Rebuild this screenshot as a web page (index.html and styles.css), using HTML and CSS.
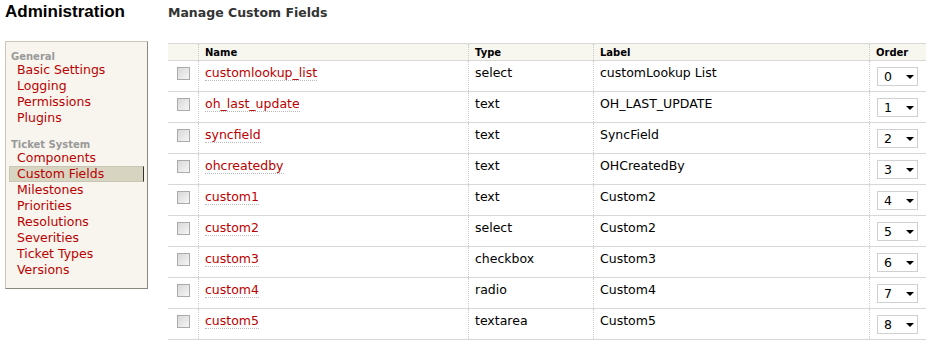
FILE: index.html
```html
<!DOCTYPE html>
<html lang="en">
<head>
  <meta charset="UTF-8">
  <title>Manage Custom Fields</title>
  <link rel="stylesheet" href="styles.css">
</head>
<body>
  <div class="page">
    <div class="side">
      <h1>Administration</h1>
      <div class="tabs">
        <div class="group">General</div>
        <a href="#">Basic Settings</a>
        <a href="#">Logging</a>
        <a href="#">Permissions</a>
        <a href="#">Plugins</a>
        <div class="group">Ticket System</div>
        <a href="#">Components</a>
        <a href="#" class="active">Custom Fields</a>
        <a href="#">Milestones</a>
        <a href="#">Priorities</a>
        <a href="#">Resolutions</a>
        <a href="#">Severities</a>
        <a href="#">Ticket Types</a>
        <a href="#">Versions</a>
      </div>
    </div>

    <div class="content">
      <h2>Manage Custom Fields</h2>
      <table class="listing">
        <thead>
          <tr>
            <th class="sel"></th>
            <th class="name">Name</th>
            <th class="type">Type</th>
            <th class="label">Label</th>
            <th class="order">Order</th>
          </tr>
        </thead>
        <tbody id="rows"></tbody>
      </table>
    </div>
  </div>

  <script>
    const fields = [
      ["customlookup_list", "select", "customLookup List"],
      ["oh_last_update", "text", "OH_LAST_UPDATE"],
      ["syncfield", "text", "SyncField"],
      ["ohcreatedby", "text", "OHCreatedBy"],
      ["custom1", "text", "Custom2"],
      ["custom2", "select", "Custom2"],
      ["custom3", "checkbox", "Custom3"],
      ["custom4", "radio", "Custom4"],
      ["custom5", "textarea", "Custom5"]
    ];

    const body = document.getElementById("rows");
    fields.forEach((f, i) => {
      body.innerHTML += '<tr>' +
        '<td class="sel"><span class="check"></span></td>' +
        `<td class="name"><a href="#">${f[0]}</a></td>` +
        `<td class="type">${f[1]}</td>` +
        `<td class="label">${f[2]}</td>` +
        `<td class="order"><span class="select">${i}<i></i></span></td>` +
      '</tr>';
    });
  </script>
</body>
</html>
```

FILE: styles.css
```css
body {
  margin: 0;
  padding: 0;
  background-color: #fff;
  font-family: "DejaVu Sans", Verdana, sans-serif;
  font-size: 12px;
  color: #000;
  overflow: hidden;
}
.page {
  display: flex;
  padding: 0 0 0 5px;
}
.side {
  width: 143px;
  flex-shrink: 0;
}
h1 {
  font-family: "Liberation Sans", Arial, sans-serif;
  font-size: 17px;
  font-weight: bold;
  margin: 2px 0 0 0;
  height: 39px;
}
.tabs {
  background-color: #f7f5ee;
  border: 1px solid #c8c6bc;
  border-right-color: #8a8980;
  border-bottom-color: #8a8980;
  padding: 9px 3px 10px 3px;
}
.group {
  font-size: 10px;
  font-weight: bold;
  color: #999;
  padding-left: 2px;
  line-height: 11px;
  height: 11px;
}
a + .group {
  margin-top: 13px;
}
.tabs a {
  display: block;
  color: #b00;
  text-decoration: none;
  font-size: 12.5px;
  padding-left: 7px;
  border: 1px solid transparent;
  height: 14px;
  line-height: 14px;
}
.tabs a.active {
  background-color: #d7d4c2;
  border-color: #c9c6b4;
  border-right: 1px solid #333;
}
.content {
  margin-left: 20px;
  flex: 1;
}
h2 {
  font-size: 12.5px;
  font-weight: bold;
  color: #333;
  margin: 5px 0 0 0;
  height: 38px;
}
table.listing {
  border-collapse: collapse;
  width: 758px;
  table-layout: fixed;
}
.listing th {
  background-color: #f7f7f0;
  border-top: 1px solid #d7d7d7;
  border-bottom: 1px solid #d7d7d7;
  border-left: 1px dotted #ccc;
  font-size: 10px;
  font-weight: bold;
  text-align: left;
  padding: 2px 6px 1px 6px;
  height: 13px;
}
.listing th:first-child,
.listing td:first-child {
  border-left: none;
}
.listing td {
  border-bottom: 1px solid #d7d7d7;
  border-left: 1px dotted #ccc;
  padding: 4px 6px 0 6px;
  height: 26px;
  box-sizing: border-box;
  vertical-align: top;
  font-size: 12.5px;
  line-height: 16px;
}
.listing tbody tr {
  height: 31px;
}
.listing .sel { width: 18px; }
.listing .name { width: 257px; }
.listing .type { width: 112px; }
.listing .label { width: 263px; }
.listing td.order { padding: 6px 0 0 7px; }
.listing td.sel { padding: 6px 0 0 9px; }
.listing a {
  color: #b00;
  text-decoration: none;
  border-bottom: 1px dotted #bbb;
}
.check {
  display: block;
  width: 11px;
  height: 11px;
  border: 1px solid #aaa;
  background: linear-gradient(135deg, #d8d8d8, #f6f6f6);
}
.select {
  display: flex;
  align-items: center;
  justify-content: space-between;
  width: 30px;
  height: 17px;
  border: 1px solid #d0d0d0;
  padding: 0 3px 0 6px;
  font-size: 12.5px;
  background-color: #fff;
}
.select i {
  width: 0;
  height: 0;
  border-left: 4px solid transparent;
  border-right: 4px solid transparent;
  border-top: 4px solid #000;
}
```
